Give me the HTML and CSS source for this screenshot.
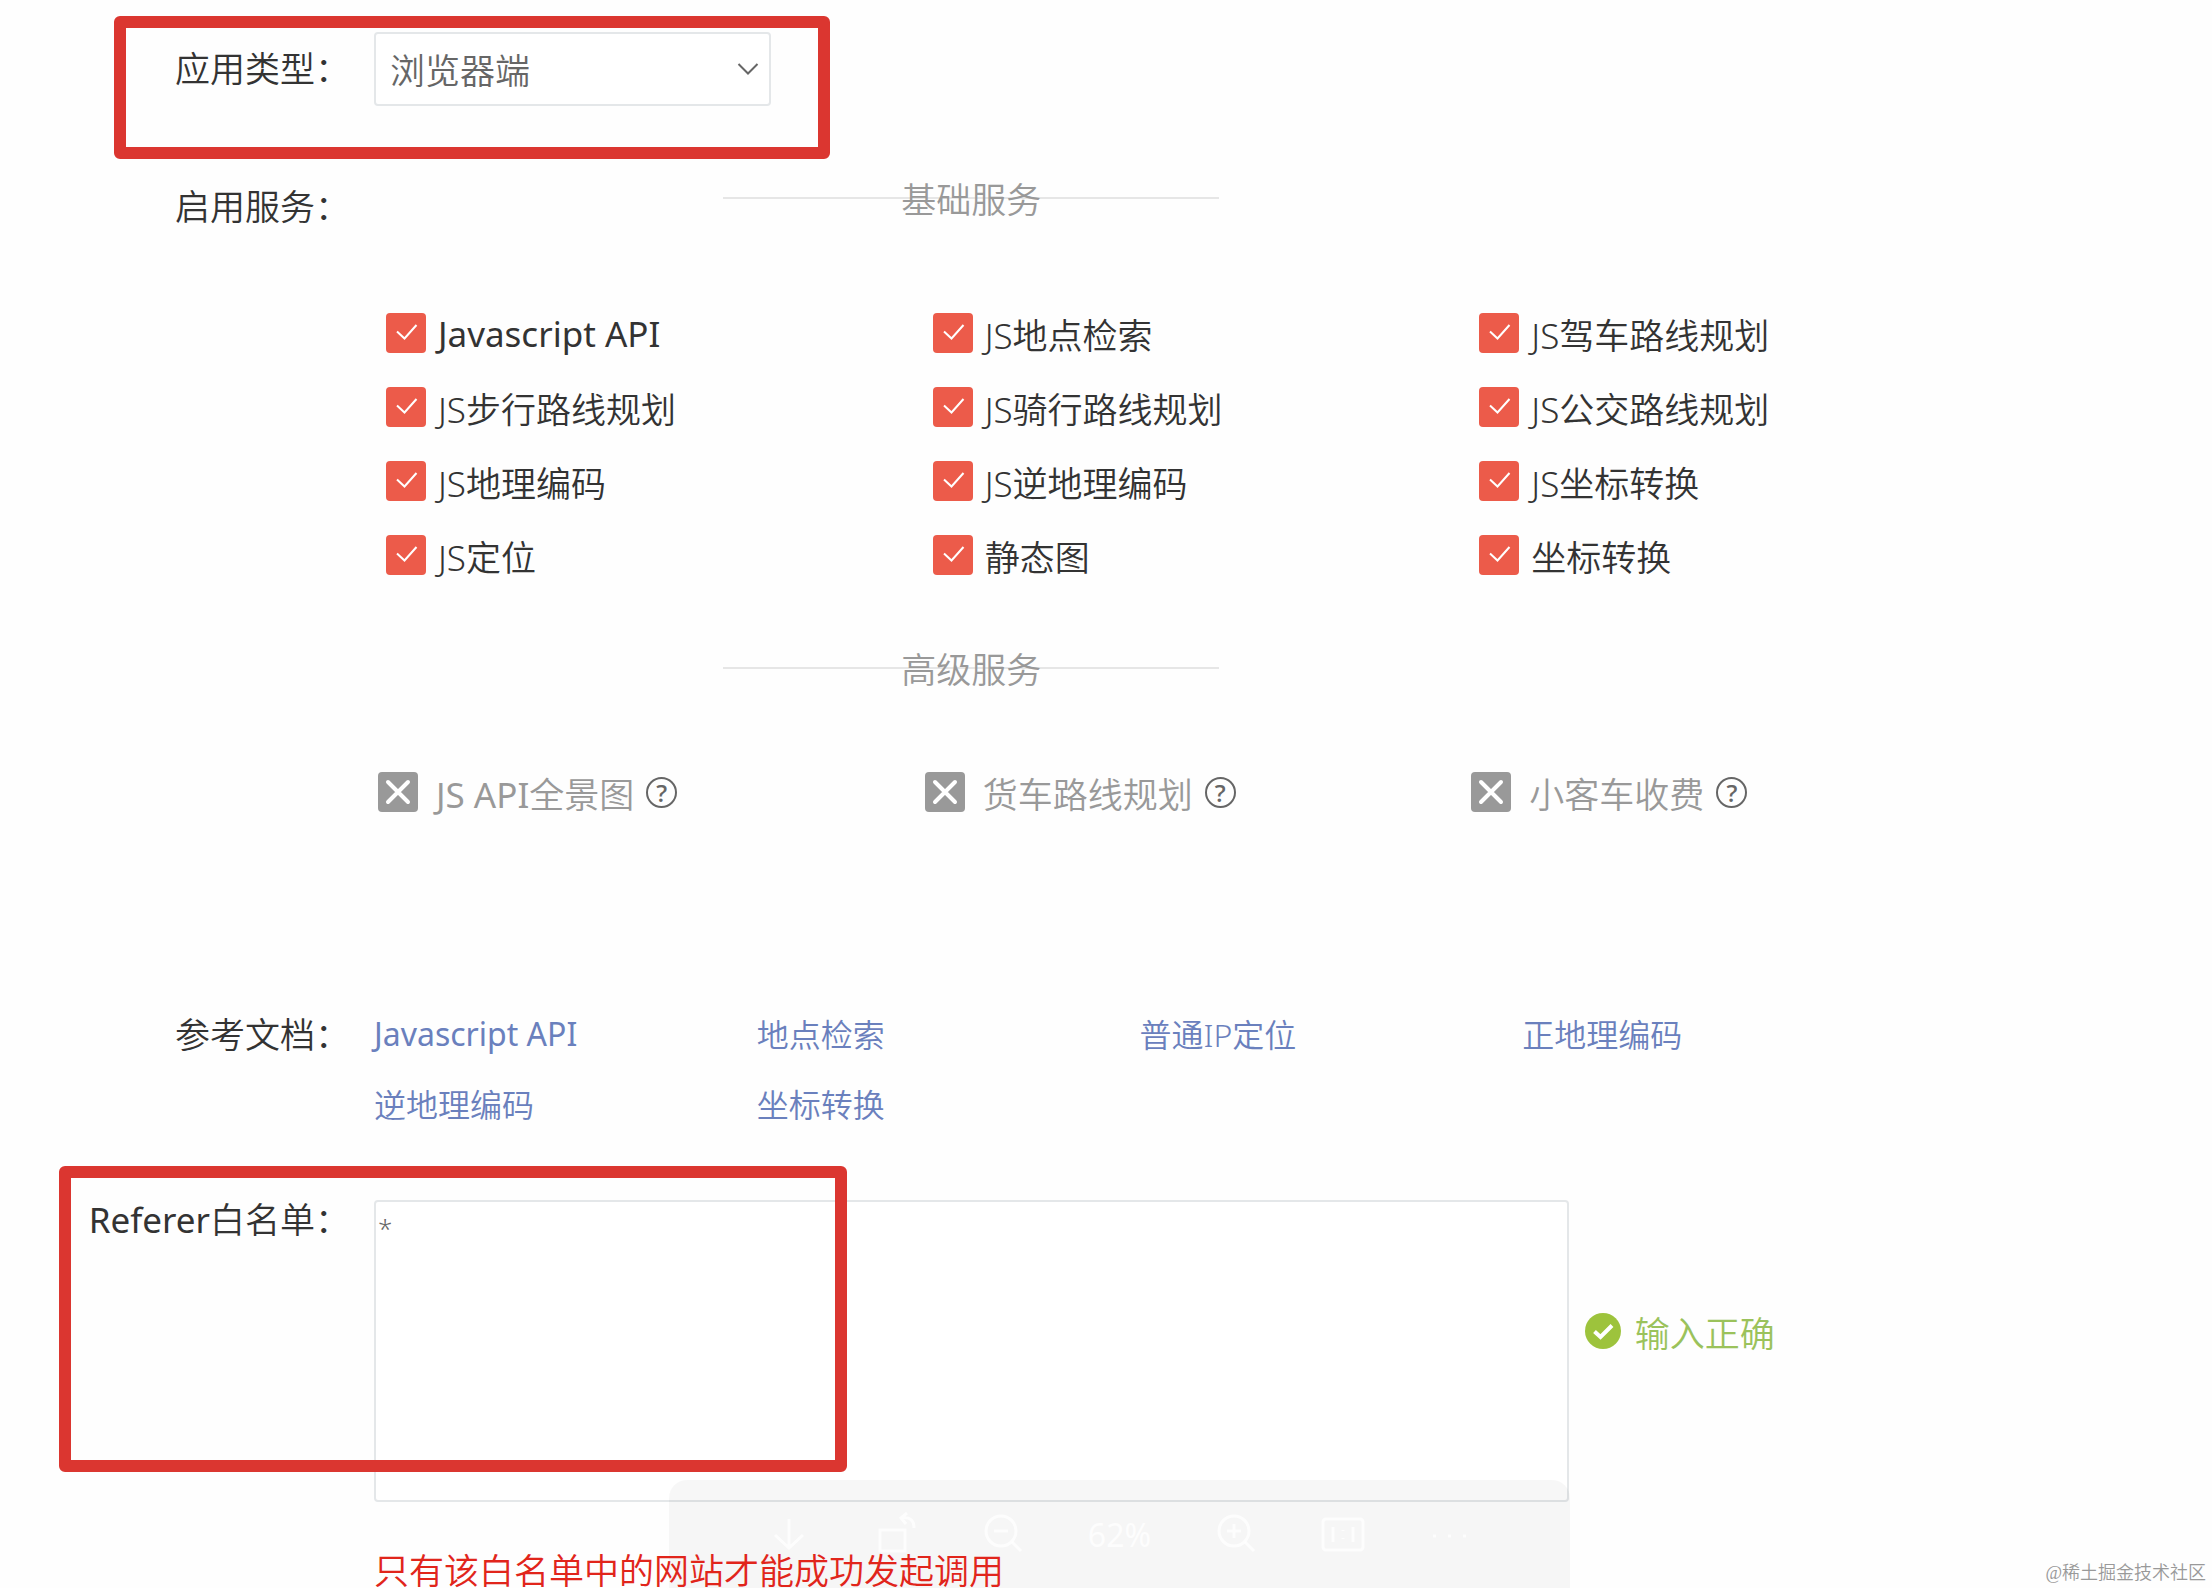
FILE: index.html
```html
<!DOCTYPE html>
<html lang="zh-CN">
<head>
  <meta charset="UTF-8" />
  <meta name="viewport" content="width=device-width, initial-scale=1" />
  <title>应用设置</title>
  <link rel="stylesheet" href="styles.css">
</head>
<body>
  <form class="app-form">
    <div class="row row-type">
      <label class="row-label" for="app-type">应用类型：</label>
      <div class="row-content">
        <div class="select-wrap">
          <select id="app-type">
            <option>浏览器端</option>
          </select>
          <svg class="chevron" viewBox="0 0 22 14" aria-hidden="true"><path d="M1.5 2 L11 11.5 L20.5 2" /></svg>
        </div>
      </div>
      <div class="highlight highlight-type"></div>
    </div>

    <div class="row row-services">
      <div class="row-label">启用服务：</div>
      <div class="row-content">
        <div class="group-title"><span>基础服务</span></div>
        <div class="services">
          <label class="service en"><input type="checkbox" checked>Javascript API</label>
          <label class="service"><input type="checkbox" checked>JS地点检索</label>
          <label class="service"><input type="checkbox" checked>JS驾车路线规划</label>
          <label class="service"><input type="checkbox" checked>JS步行路线规划</label>
          <label class="service"><input type="checkbox" checked>JS骑行路线规划</label>
          <label class="service"><input type="checkbox" checked>JS公交路线规划</label>
          <label class="service"><input type="checkbox" checked>JS地理编码</label>
          <label class="service"><input type="checkbox" checked>JS逆地理编码</label>
          <label class="service"><input type="checkbox" checked>JS坐标转换</label>
          <label class="service"><input type="checkbox" checked>JS定位</label>
          <label class="service"><input type="checkbox" checked>静态图</label>
          <label class="service"><input type="checkbox" checked>坐标转换</label>
        </div>
        <div class="group-title"><span>高级服务</span></div>
        <div class="services services-advanced">
          <div class="service">
            <input type="checkbox" id="panorama" disabled>
            <label for="panorama"><span class="en">JS API</span>全景图</label>
            <button type="button" class="help">?</button>
          </div>
          <div class="service">
            <input type="checkbox" id="truck" disabled>
            <label for="truck">货车路线规划</label>
            <button type="button" class="help">?</button>
          </div>
          <div class="service">
            <input type="checkbox" id="toll" disabled>
            <label for="toll">小客车收费</label>
            <button type="button" class="help">?</button>
          </div>
        </div>
      </div>
    </div>

    <div class="row row-docs">
      <div class="row-label">参考文档：</div>
      <div class="row-content docs">
        <a class="en" href="#">Javascript API</a>
        <a href="#">地点检索</a>
        <a href="#">普通IP定位</a>
        <a href="#">正地理编码</a>
        <a href="#">逆地理编码</a>
        <a href="#">坐标转换</a>
      </div>
    </div>

    <div class="row row-referer">
      <label class="row-label" for="referer"><span class="en">Referer</span>白名单：</label>
      <div class="row-content">
        <div class="referer">
          <textarea id="referer">*</textarea>
          <div class="status">
            <svg viewBox="0 0 36 36" aria-hidden="true"><circle cx="18" cy="18" r="18" /><path d="M9.5 18.5 L15.5 24 L27 12.5" /></svg>
            <span>输入正确</span>
          </div>
        </div>
        <p class="hint">只有该白名单中的网站才能成功发起调用</p>
      </div>
      <div class="highlight highlight-referer"></div>
    </div>
  </form>

  <!-- Image viewer toolbar -->
  <div class="viewer-bar">
    <svg viewBox="0 0 44 44"><path d="M22 7 V36 M8 23 L22 36 L36 23" /></svg>
    <svg viewBox="0 0 44 44"><path d="M6 18 H31 V39 H6 Z M40 16 C40 8 36 5 28 6 M33 1 L27 6 L32 12" /></svg>
    <svg viewBox="0 0 44 44"><circle cx="20" cy="19" r="15" /><path d="M13 19 H27 M31 30 L40 39" /></svg>
    <span class="en">62%</span>
    <svg viewBox="0 0 44 44"><circle cx="20" cy="19" r="15" /><path d="M13 19 H27 M20 12 V26 M31 30 L40 39" /></svg>
    <svg viewBox="0 0 44 44"><rect x="2" y="7" width="40" height="31" rx="3" /><path d="M12 15 V30 M32 15 V30 M22 18 V19 M22 26 V27" /></svg>
    <svg viewBox="0 0 44 44"><path d="M5 24 H8 M20 24 H23 M35 24 H38" /></svg>
  </div>

  <div class="watermark">@稀土掘金技术社区</div>
</body>
</html>
```

FILE: styles.css
```css
* { margin: 0; padding: 0; box-sizing: border-box; }
body {
  font-family: 'Noto Sans', 'Noto Sans CJK SC', sans-serif;
  font-size: 35px;
  font-weight: 350;
  color: #333;
  background: #fefefe;
  min-height: 100vh;
  position: relative;
  overflow: hidden;
}
.en { font-weight: 400; }
.app-form {
  padding-top: 32px;
}
.row {
  display: flex;
  gap: 24px;
  position: relative;
}
.row-label {
  flex: 0 0 350px;
  line-height: 74px;
  text-align: right;
}
.row-content {
  flex: 1;
  min-width: 0;
}
.row-type { margin-bottom: 64px; }
.row-services { margin-bottom: 169px; }
.row-docs { margin-bottom: 45px; }

/* App type */
.select-wrap {
  position: relative;
  width: 397px;
}
select {
  appearance: none;
  display: block;
  width: 100%;
  height: 74px;
  padding: 2px 14px 0;
  border: 2px solid #e4e7e9;
  border-radius: 4px;
  background: #fff;
  font: inherit;
  color: #666;
}
.chevron {
  position: absolute;
  right: 12px;
  top: 30px;
  width: 22px;
  height: 14px;
  fill: none;
  stroke: #666;
  stroke-width: 2;
}

/* Services */
.group-title {
  width: 65%;
  line-height: 60px;
  display: grid;
  justify-items: center;
  align-items: center;
  color: #999;
}
.group-title::before {
  content: '';
  grid-area: 1 / 1;
  width: 496px;
  height: 2px;
  margin-bottom: 4px;
  background: #e6e6e6;
}
.group-title span { grid-area: 1 / 1; }
.services {
  display: grid;
  grid-template-columns: repeat(3, 1fr);
  grid-auto-rows: 74px;
  margin: 66px 186px 48px 0;
  padding-left: 12px;
}
.service {
  display: flex;
  align-items: center;
  gap: 12px;
}
.service input {
  appearance: none;
  flex: none;
  width: 40px;
  height: 40px;
  border-radius: 4px;
  background: #ec5b4a url("data:image/svg+xml,%3Csvg xmlns='http://www.w3.org/2000/svg' viewBox='0 0 40 40' fill='none' stroke='white' stroke-width='2'%3E%3Cpath d='M11 18.5 L18.5 25.5 L30.5 12'/%3E%3C/svg%3E");
}
.services-advanced {
  margin: 55px 194px 0 0;
  padding-left: 4px;
  color: #999;
}
.services-advanced .service input {
  margin-right: 6px;
  background: #999 url("data:image/svg+xml,%3Csvg xmlns='http://www.w3.org/2000/svg' viewBox='0 0 40 40' fill='none' stroke='white' stroke-width='4' stroke-linecap='round'%3E%3Cpath d='M10 10 L30 30 M30 10 L10 30'/%3E%3C/svg%3E");
}
.help {
  width: 31px;
  height: 31px;
  border: 2px solid #666;
  border-radius: 50%;
  background: none;
  font: 600 24px/27px 'Open Sans', sans-serif;
  color: #666;
}

/* Docs */
.docs {
  display: grid;
  grid-template-columns: repeat(4, 1fr);
  grid-auto-rows: 70px;
  align-items: center;
  margin-right: 307px;
  font-size: 32px;
}
.docs a {
  color: #6a80bd;
  text-decoration: none;
}

/* Referer whitelist */
.referer {
  display: flex;
  align-items: center;
  gap: 16px;
  margin-top: 17px;
}
textarea {
  display: block;
  width: 65%;
  height: 302px;
  padding: 8px 2px;
  border: 2px solid #e4e7e9;
  border-radius: 4px;
  background: #fff;
  font: inherit;
  font-size: 26px;
  color: #666;
  resize: none;
}
.status {
  display: flex;
  align-items: center;
  gap: 14px;
  margin-bottom: 40px;
  color: #9bc25b;
}
.status svg { width: 36px; height: 36px; }
.status circle { fill: #9dc33c; }
.status path {
  fill: none;
  stroke: #fff;
  stroke-width: 4;
}
.hint {
  margin-top: 52px;
  line-height: 34px;
  position: relative;
  z-index: 2;
  color: #e1251b;
}

/* Red marker boxes */
.highlight {
  position: absolute;
  border: 12px solid #db3630;
  border-radius: 6px;
  pointer-events: none;
}
.highlight-type {
  left: 114px;
  top: -16px;
  width: 716px;
  height: 143px;
}
.highlight-referer {
  left: 59px;
  top: -17px;
  width: 788px;
  height: 306px;
}

.viewer-bar {
  position: absolute;
  left: 669px;
  bottom: 0;
  width: 901px;
  height: 108px;
  padding: 0 98px;
  display: flex;
  align-items: center;
  justify-content: space-between;
  border-radius: 18px 18px 0 0;
  background: rgba(0,0,0,0.03);
  font-size: 32px;
  color: rgba(255,255,255,0.8);
}
.viewer-bar svg {
  width: 44px;
  height: 44px;
  fill: none;
  stroke: rgba(255,255,255,0.8);
  stroke-width: 3;
}
.watermark {
  position: absolute;
  right: 6px;
  bottom: 4px;
  font-family: 'Liberation Serif', 'Noto Sans CJK SC', serif;
  font-size: 18px;
  color: #999;
}
```
